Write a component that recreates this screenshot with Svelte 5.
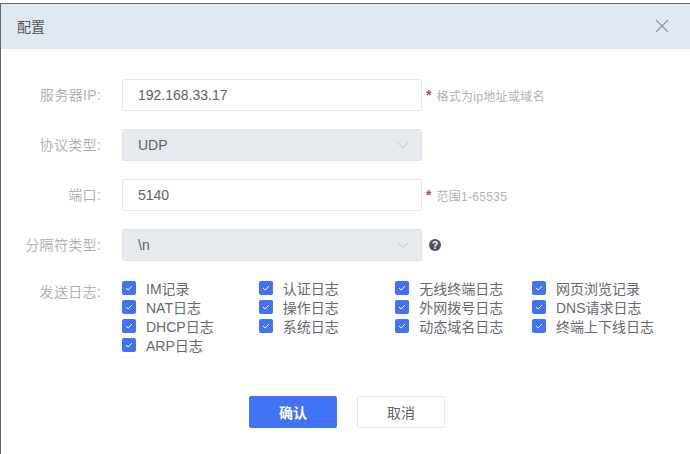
<script lang="ts">
	const form_rows = [
		{ label: '服务器IP:', value: '192.168.33.17', hint: '格式为ip地址或域名' },
		{ label: '协议类型:', value: 'UDP', select: true },
		{ label: '端口:', value: '5140', hint: '范围1-65535' },
		{ label: '分隔符类型:', value: '\\n', select: true, help: true }
	];
	const logs = [
		'IM记录', '认证日志', '无线终端日志', '网页浏览记录',
		'NAT日志', '操作日志', '外网拨号日志', 'DNS请求日志',
		'DHCP日志', '系统日志', '动态域名日志', '终端上下线日志',
		'ARP日志'
	];
</script>

<section class="dialog">
	<header class="titlebar">
		<span class="title">配置</span>
		<svg class="close" width="14" height="14" viewBox="0 0 14 14">
			<path d="M1 1L13 13M13 1L1 13" stroke="#8f959e" stroke-width="1.2" fill="none" />
		</svg>
	</header>

	<div class="form">
		{#each form_rows as row}
			<div class="row">
				<span class="label">{row.label}</span>
				<div class="field" class:select={row.select}>
					<span>{row.value}</span>
					{#if row.select}
						<svg width="14" height="8" viewBox="0 0 14 8">
							<path d="M1.5 1.5L7 6.5L12.5 1.5" stroke="#c3c8cf" stroke-width="1" fill="none" />
						</svg>
					{/if}
				</div>
				{#if row.hint}
					<span class="star">*</span>
					<span class="hint">{row.hint}</span>
				{/if}
				{#if row.help}
					<span class="help">?</span>
				{/if}
			</div>
		{/each}

		<div class="row logs-row">
			<span class="label">发送日志:</span>
			<div class="logs">
				{#each logs as name}
					<div class="log">
						<span class="check">
							<svg width="10" height="8" viewBox="0 0 10 8">
								<path d="M2 4L4.2 6L8 2" stroke="#fff" stroke-width="1" fill="none" />
							</svg>
						</span>
						<span>{name}</span>
					</div>
				{/each}
			</div>
		</div>
	</div>

	<div class="actions">
		<button class="btn primary">确认</button>
		<button class="btn">取消</button>
	</div>
</section>

<style>
	:global(body) {
		margin: 0;
		background: #fff;
	}
	.dialog {
		box-sizing: border-box;
		width: 690px;
		height: 451px;
		margin-top: 3px;
		border-top: 1px solid #666;
		border-left: 1px solid #666;
		background: #fff;
		font-family: 'Liberation Sans', 'Noto Sans CJK SC', sans-serif;
		overflow: hidden;
	}
	.titlebar {
		box-sizing: border-box;
		display: flex;
		align-items: center;
		justify-content: space-between;
		height: 45px;
		padding: 0 21px 2px 16px;
		background: #e0e8f1;
	}
	.title {
		font-size: 14px;
		color: #555;
	}
	.form {
		display: flex;
		flex-direction: column;
		gap: 18px;
		padding-top: 30px;
	}
	.row {
		display: flex;
		align-items: center;
		height: 32px;
		font-size: 14px;
	}
	.label {
		width: 100px;
		padding-bottom: 2px;
		text-align: right;
		letter-spacing: 0.3px;
		color: #b0b3b8;
		flex-shrink: 0;
	}
	.field {
		box-sizing: border-box;
		display: flex;
		align-items: center;
		justify-content: space-between;
		width: 300px;
		height: 32px;
		margin-left: 21px;
		padding: 0 11px 0 15px;
		border: 1px solid #e5e9ee;
		border-radius: 2px;
		color: #606266;
		font-size: 14px;
	}
	.field.select {
		background: #e6eaee;
		border-color: #dfe3e8;
	}
	.star {
		margin-left: 4px;
		color: #c0474a;
		font-size: 14px;
		font-weight: 700;
	}
	.hint {
		margin-left: 5px;
		font-size: 12px;
		letter-spacing: 0.3px;
		color: #b0b3b8;
	}
	.help {
		display: flex;
		align-items: center;
		justify-content: center;
		width: 12px;
		height: 12px;
		margin-left: 7px;
		border-radius: 50%;
		background: #50545c;
		color: #fff;
		font-size: 10px;
		font-weight: 700;
	}
	.logs-row {
		align-items: flex-start;
		height: auto;
		margin-top: -1px;
	}
	.logs-row .label {
		padding-top: 3px;
	}
	.logs {
		display: grid;
		grid-template-columns: repeat(4, 136.67px);
		grid-auto-rows: 19px;
		margin-left: 21px;
	}
	.log {
		display: flex;
		align-items: center;
		gap: 10px;
		font-size: 14px;
		color: #666a70;
		white-space: nowrap;
	}
	.check {
		display: flex;
		align-items: center;
		justify-content: center;
		width: 14px;
		height: 14px;
		border-radius: 2px;
		background: #4273f6;
	}
	.actions {
		display: flex;
		justify-content: center;
		gap: 20px;
		margin-top: 42px;
		padding-left: 3px;
	}
	.btn {
		box-sizing: border-box;
		width: 88px;
		height: 32px;
		border: 1px solid #e5e7ea;
		border-radius: 2px;
		background: #fff;
		color: #606266;
		font-family: inherit;
		font-size: 14px;
	}
	.btn.primary {
		background: #4273f6;
		border-color: #4273f6;
		color: #fff;
		font-weight: 700;
	}
</style>
